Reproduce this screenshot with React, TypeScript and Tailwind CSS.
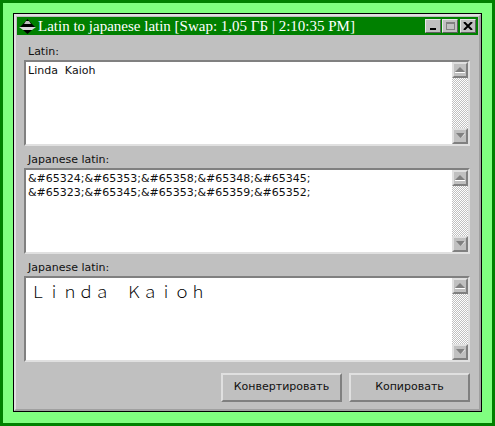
const ui = { fontFamily: '"DejaVu Sans", sans-serif' };

const Arrow = ({ down }: { down?: boolean }) => (
  <svg width="10" height="6" viewBox="0 0 10 6" className="block">
    {down ? (
      <>
        <path d="M1 0h9L5.5 5z" fill="#808080" />
        <path d="M6 5l4-5v1L6 5z" fill="#ffffff" />
      </>
    ) : (
      <>
        <path d="M5 0l5 5H0z" fill="#808080" />
        <path d="M0 5h10v1H0z" fill="#ffffff" />
      </>
    )}
  </svg>
);

const ScrollButton = ({ down }: { down?: boolean }) => (
  <div className="w-[16px] h-[16px] shrink-0 flex items-center justify-center bg-[#c0c0c0] border-2 border-t-[#e0e0e0] border-l-[#e0e0e0] border-r-[#808080] border-b-[#808080]">
    <Arrow down={down} />
  </div>
);

const Field = ({ label, children }: { label: string; children: React.ReactNode }) => (
  <div className="flex flex-col">
    <div className="h-[22px] pl-[4px] pt-[3px] text-[11px] leading-[22px] text-[#101010]">{label}</div>
    <div className="h-[86px] flex bg-white border-2 border-t-[#808080] border-l-[#808080] border-r-[#e0e0e0] border-b-[#e0e0e0]">
      <div className="flex-1 min-w-0 overflow-hidden">{children}</div>
      <div className="w-[16px] flex flex-col bg-[repeating-conic-gradient(#c0c0c0_0_25%,#ffffff_0_50%)] bg-[length:2px_2px]">
        <ScrollButton />
        <div className="flex-1" />
        <ScrollButton down />
      </div>
    </div>
  </div>
);

const TitleButton = ({ children }: { children: React.ReactNode }) => (
  <div className="w-[16px] h-[14px] flex items-center justify-center bg-[#c0c0c0] border border-t-[#e8e8e8] border-l-[#e8e8e8] border-r-[#606060] border-b-[#606060]">
    {children}
  </div>
);

const Button = ({ label }: { label: string }) => (
  <div className="w-[121px] h-[29px] flex items-center justify-center text-[11px] text-[#101010] bg-[#c0c0c0] border-2 border-t-[#e0e0e0] border-l-[#e0e0e0] border-r-[#808080] border-b-[#808080]">
    {label}
  </div>
);

export default function App() {
  return (
    <div className="w-[495px] h-[426px] bg-[#80ff80] border-[3px] border-[#008000] pt-[10px] pl-[10px] pr-[10px] pb-[11px]" style={ui}>
      <div className="h-[399px] bg-[#c0c0c0] border border-black">
        <div className="h-full border-2 border-t-[#e0e0e0] border-l-[#e0e0e0] border-r-[#a0a0a0] border-b-[#a0a0a0] px-[1px] pt-[1px]">
          {/* Title bar */}
          <div className="h-[18px] bg-[#008000] flex items-center pl-[2px] pr-[2px]">
            <svg width="17" height="17" viewBox="0 0 17 17" className="shrink-0">
              <path d="M8.5 1L12 5l4 4H1l4-4z" fill="#000000" />
              <path d="M7 3h3l2 3H5z" fill="#c0c0c0" />
              <path d="M0 9h17l-4 3H4z" fill="#d8d8d8" />
              <path d="M4 12h9l-4.500 4z" fill="#000000" />
            </svg>
            <span className="ml-[2px] text-[15px] leading-[18px] text-white whitespace-nowrap" style={{ fontFamily: '"Liberation Serif", serif' }}>
              Latin to japanese latin [Swap: 1,05 ГБ | 2:10:35 PM]
            </span>
            <div className="ml-auto flex items-center">
              <TitleButton>
                <div className="w-[6px] h-[2px] bg-black mt-[6px]" />
              </TitleButton>
              <div className="w-[1px]" />
              <TitleButton>
                <div className="w-[9px] h-[8px] border border-[#808080] border-t-2" />
              </TitleButton>
              <div className="w-[2px]" />
              <TitleButton>
                <svg width="10" height="8" viewBox="0 0 10 8">
                  <path d="M1 0l8 8M9 0l-8 8" stroke="#000000" strokeWidth="2" fill="none" />
                </svg>
              </TitleButton>
            </div>
          </div>

          {/* Fields */}
          <div className="pl-[7px] pr-[8px] pt-[3px]">
            <div className="flex flex-col">
              <Field label="Latin:">
                <div className="px-[2px] pt-[2px] text-[11px] leading-[14px] text-[#101010] whitespace-pre">Linda  Kaioh</div>
              </Field>
              <Field label="Japanese latin:">
                <div className="px-[2px] pt-[2px] text-[11px] leading-[14px] text-[#101010] whitespace-pre">
                  {"&#65324;&#65353;&#65358;&#65348;&#65345;\n&#65323;&#65345;&#65353;&#65359;&#65352;"}
                </div>
              </Field>
              <Field label="Japanese latin:">
                <div className="px-[4px] pt-[3px] text-[16px] leading-[20px] text-black whitespace-pre" style={{ fontFamily: '"Noto Sans CJK JP", sans-serif', fontWeight: 300 }}>
                  Ｌｉｎｄａ　Ｋａｉｏｈ
                </div>
              </Field>
            </div>
            <div className="flex justify-end gap-[7px] pt-[11px]">
              <Button label="Конвертировать" />
              <Button label="Копировать" />
            </div>
          </div>
        </div>
      </div>
    </div>
  );
}
